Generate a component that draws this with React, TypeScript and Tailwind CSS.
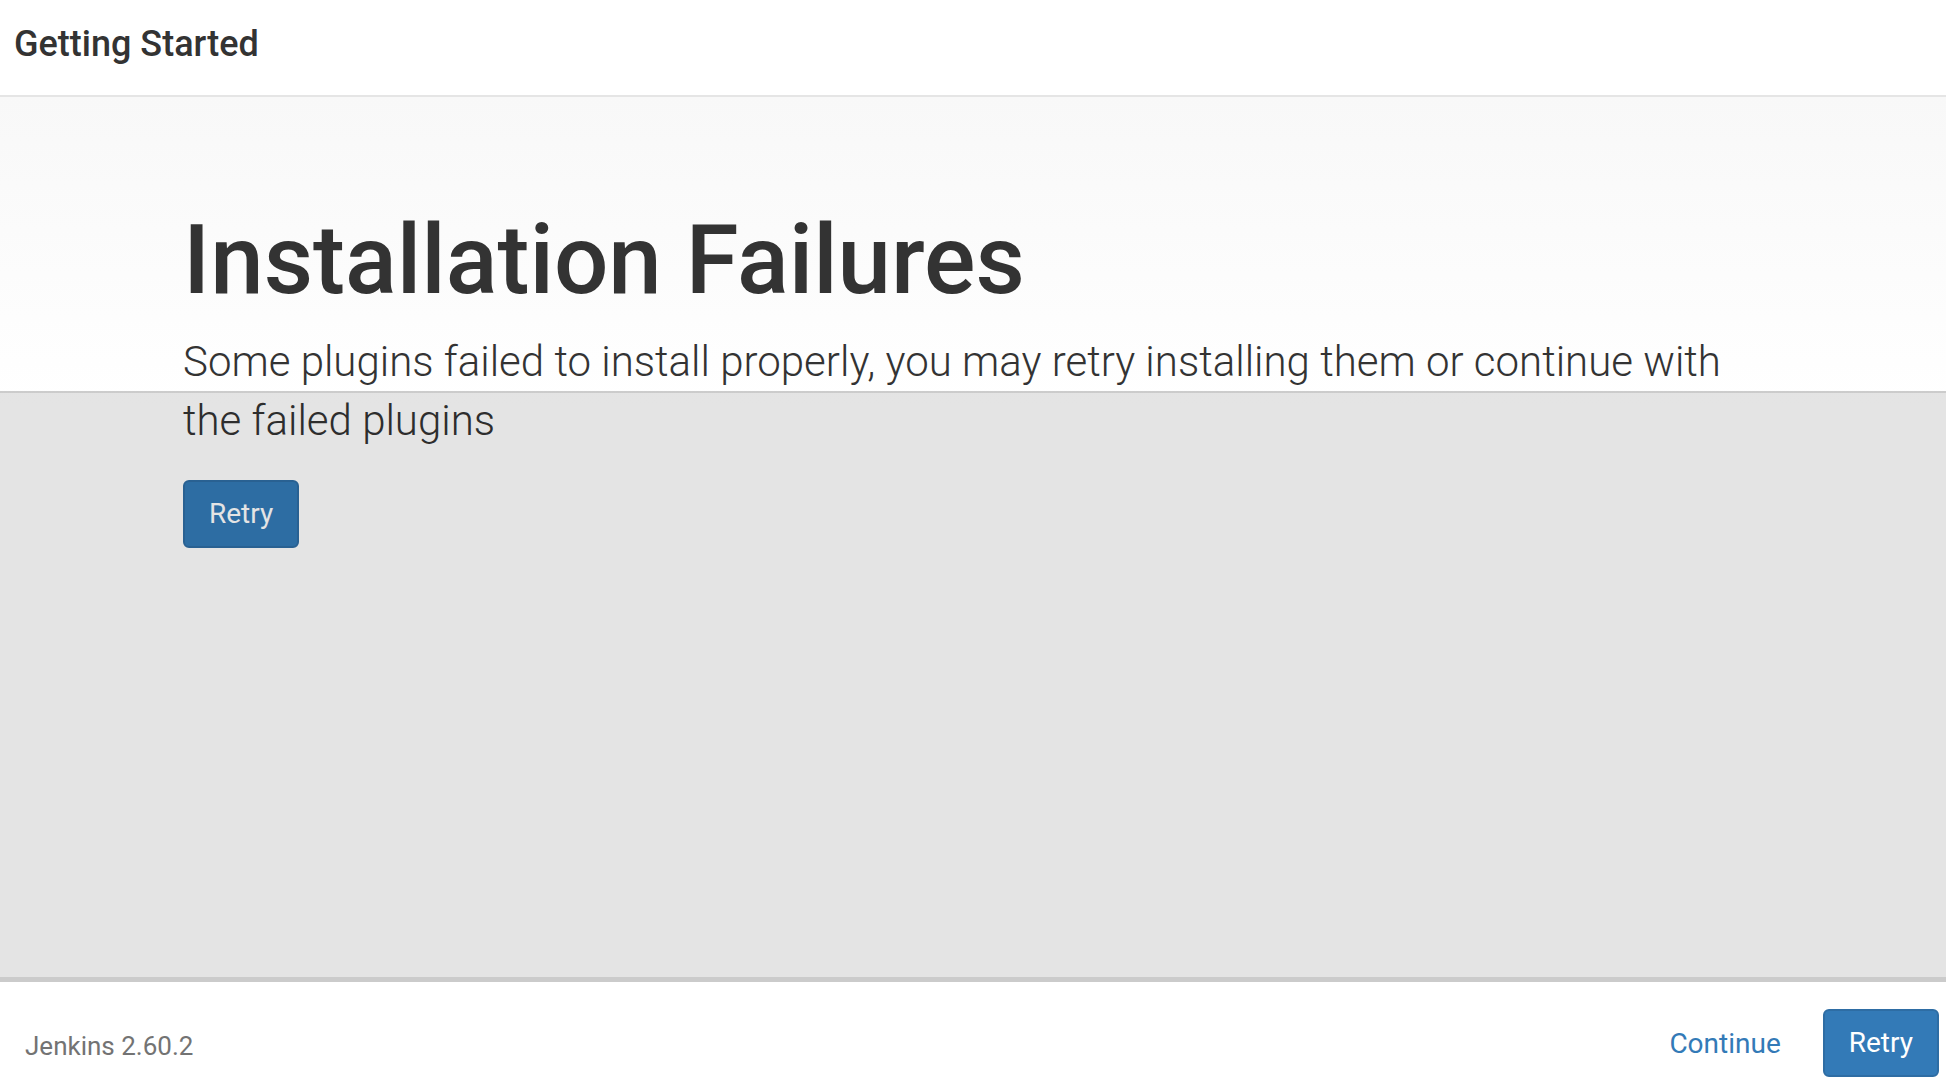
import React from "react";

export default function App() {
  const font = { fontFamily: "Roboto, 'Liberation Sans', sans-serif" };
  return (
    <div
      className="w-[1946px] h-[1086px] flex flex-col bg-white overflow-hidden text-[#333333]"
      style={font}
    >
      <header className="h-[97px] shrink-0 border-b-2 border-[#e5e5e5] pl-[14px] pt-[24px]">
        <h4 className="text-[36px] leading-[40px] font-medium text-[#333333]">
          Getting Started
        </h4>
      </header>

      <main className="relative flex-1 bg-gradient-to-b from-[#f8f8f8] via-white via-[35%] to-white">
        <div className="px-[183px] pt-[110px]">
          <h1 className="text-[96px] leading-[106px] font-medium text-[#333333]">
            Installation Failures
          </h1>
          <p className="mt-[19px] text-[42px] leading-[59px] font-light text-[#333333]">
            Some plugins failed to install properly, you may retry installing them or continue with
            the failed plugins
          </p>
          <button className="mt-[30px] h-[68px] px-[24px] rounded-[6px] border-2 border-[#2e6da4] bg-[#337ab7] text-white text-[28px] leading-[40px]">
            Retry
          </button>
        </div>
        <div className="absolute inset-x-0 top-[294px] bottom-0 bg-black/[0.106] border-t-2 border-black/[0.1] pointer-events-none" />
      </main>

      <footer className="h-[109px] shrink-0 border-t-[5px] border-[#cbcbcb] pt-[27px] pl-[25px] pr-[7px] flex items-start justify-between">
        <div className="h-[68px] flex items-center pt-[5px]">
          <span className="text-[26px] leading-[40px] text-[#737373]">Jenkins 2.60.2</span>
        </div>
        <div className="h-[68px] flex items-center gap-[42px]">
          <a className="text-[28px] leading-[40px] text-[#337ab7] cursor-pointer pt-[2px]">Continue</a>
          <button className="h-[68px] px-[24px] rounded-[6px] border-2 border-[#2e6da4] bg-[#337ab7] text-white text-[28px] leading-[40px]">
            Retry
          </button>
        </div>
      </footer>
    </div>
  );
}
